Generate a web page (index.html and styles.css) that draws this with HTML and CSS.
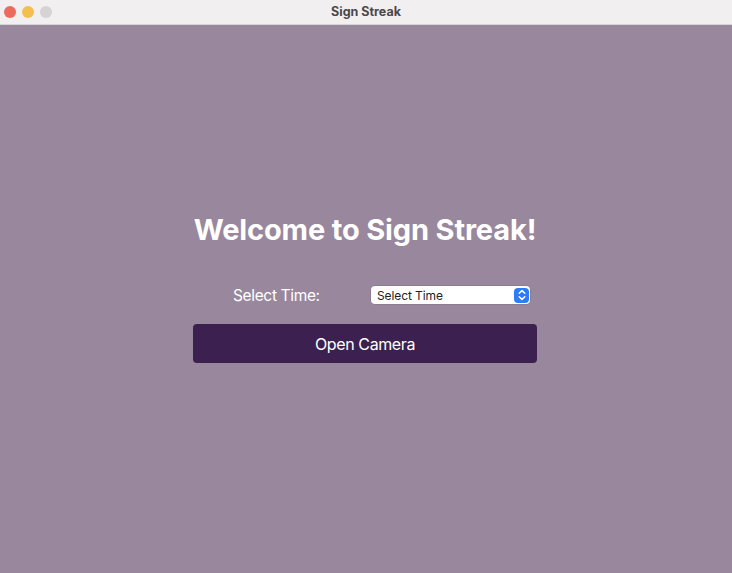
FILE: index.html
```html
<!DOCTYPE html>
<html>
<head>
<meta charset="utf-8">
<title>Sign Streak</title>
<link rel="stylesheet" href="styles.css">
</head>
<body>
<div class="window">
  <header class="titlebar">
    <div class="lights">
      <span class="light red"></span>
      <span class="light yellow"></span>
      <span class="light grey"></span>
    </div>
    <div class="title">Sign Streak</div>
  </header>
  <main class="content">
    <div class="panel">
      <h1 class="heading">Welcome to Sign Streak!</h1>
      <div class="row">
        <span class="label">Select Time:</span>
        <div class="select">
          <span class="select-text">Select Time</span>
          <span class="select-arrows">
            <svg width="12" height="14" viewBox="0 0 12 14">
              <path d="M3.2 5.2 L6 2.6 L8.8 5.2" fill="none" stroke="#fff" stroke-width="1.5" stroke-linecap="round" stroke-linejoin="round"/>
              <path d="M3.2 8.8 L6 11.4 L8.8 8.8" fill="none" stroke="#fff" stroke-width="1.5" stroke-linecap="round" stroke-linejoin="round"/>
            </svg>
          </span>
        </div>
      </div>
      <button class="open-btn">Open Camera</button>
    </div>
  </main>
</div>
</body>
</html>
```

FILE: styles.css
```css
* { box-sizing: border-box; }
html, body { margin: 0; padding: 0; }
body {
  width: 732px;
  height: 573px;
  overflow: hidden;
  font-family: Inter, "Liberation Sans", sans-serif;
  background: #98879d;
}
.window {
  display: flex;
  flex-direction: column;
  height: 573px;
}
.titlebar {
  height: 25px;
  background: #f1eff0;
  border-bottom: 1px solid #d6d3d5;
  display: flex;
  align-items: center;
  justify-content: center;
  position: relative;
}
.lights {
  position: absolute;
  left: 4px;
  top: 6px;
  display: flex;
  gap: 6px;
}
.light {
  width: 12px;
  height: 12px;
  border-radius: 50%;
}
.red { background: #ec6a5e; }
.yellow { background: #f4bf4f; }
.grey { background: #d5d3d4; }
.title {
  font-size: 12.5px;
  font-weight: 700;
  color: #4b484a;
  margin-top: -1px;
}
.content {
  flex: 1;
  display: flex;
  justify-content: center;
  padding-top: 187px;
  padding-right: 2px;
}
.panel {
  width: 344px;
  display: flex;
  flex-direction: column;
  align-items: center;
}
.heading {
  margin: 0;
  font-size: 29px;
  font-weight: 700;
  color: #ffffff;
  line-height: 36px;
  letter-spacing: -0.15px;
}
.row {
  margin-top: 37px;
  width: 344px;
  display: flex;
  align-items: center;
  height: 20px;
}
.label {
  font-size: 15.5px;
  color: #ffffff;
  margin-left: 40px;
  width: 138px;
  letter-spacing: -0.35px;
}
.select {
  width: 159px;
  height: 18px;
  background: #ffffff;
  border-radius: 4px;
  display: flex;
  align-items: center;
  justify-content: space-between;
  padding-left: 6px;
  padding-right: 1px;
  box-shadow: 0 0 0 0.5px rgba(0,0,0,0.15);
}
.select-text {
  font-size: 12px;
  color: #222222;
  letter-spacing: -0.1px;
}
.select-arrows {
  width: 15px;
  height: 15px;
  background: #2b7cf6;
  border-radius: 4px;
  display: flex;
  align-items: center;
  justify-content: center;
}
.open-btn {
  margin-top: 19px;
  width: 344px;
  height: 39px;
  background: #3c2150;
  color: #ffffff;
  border: none;
  border-radius: 4px;
  font-family: Inter, "Liberation Sans", sans-serif;
  font-size: 16px;
  letter-spacing: -0.4px;
  padding: 0;
}
```
